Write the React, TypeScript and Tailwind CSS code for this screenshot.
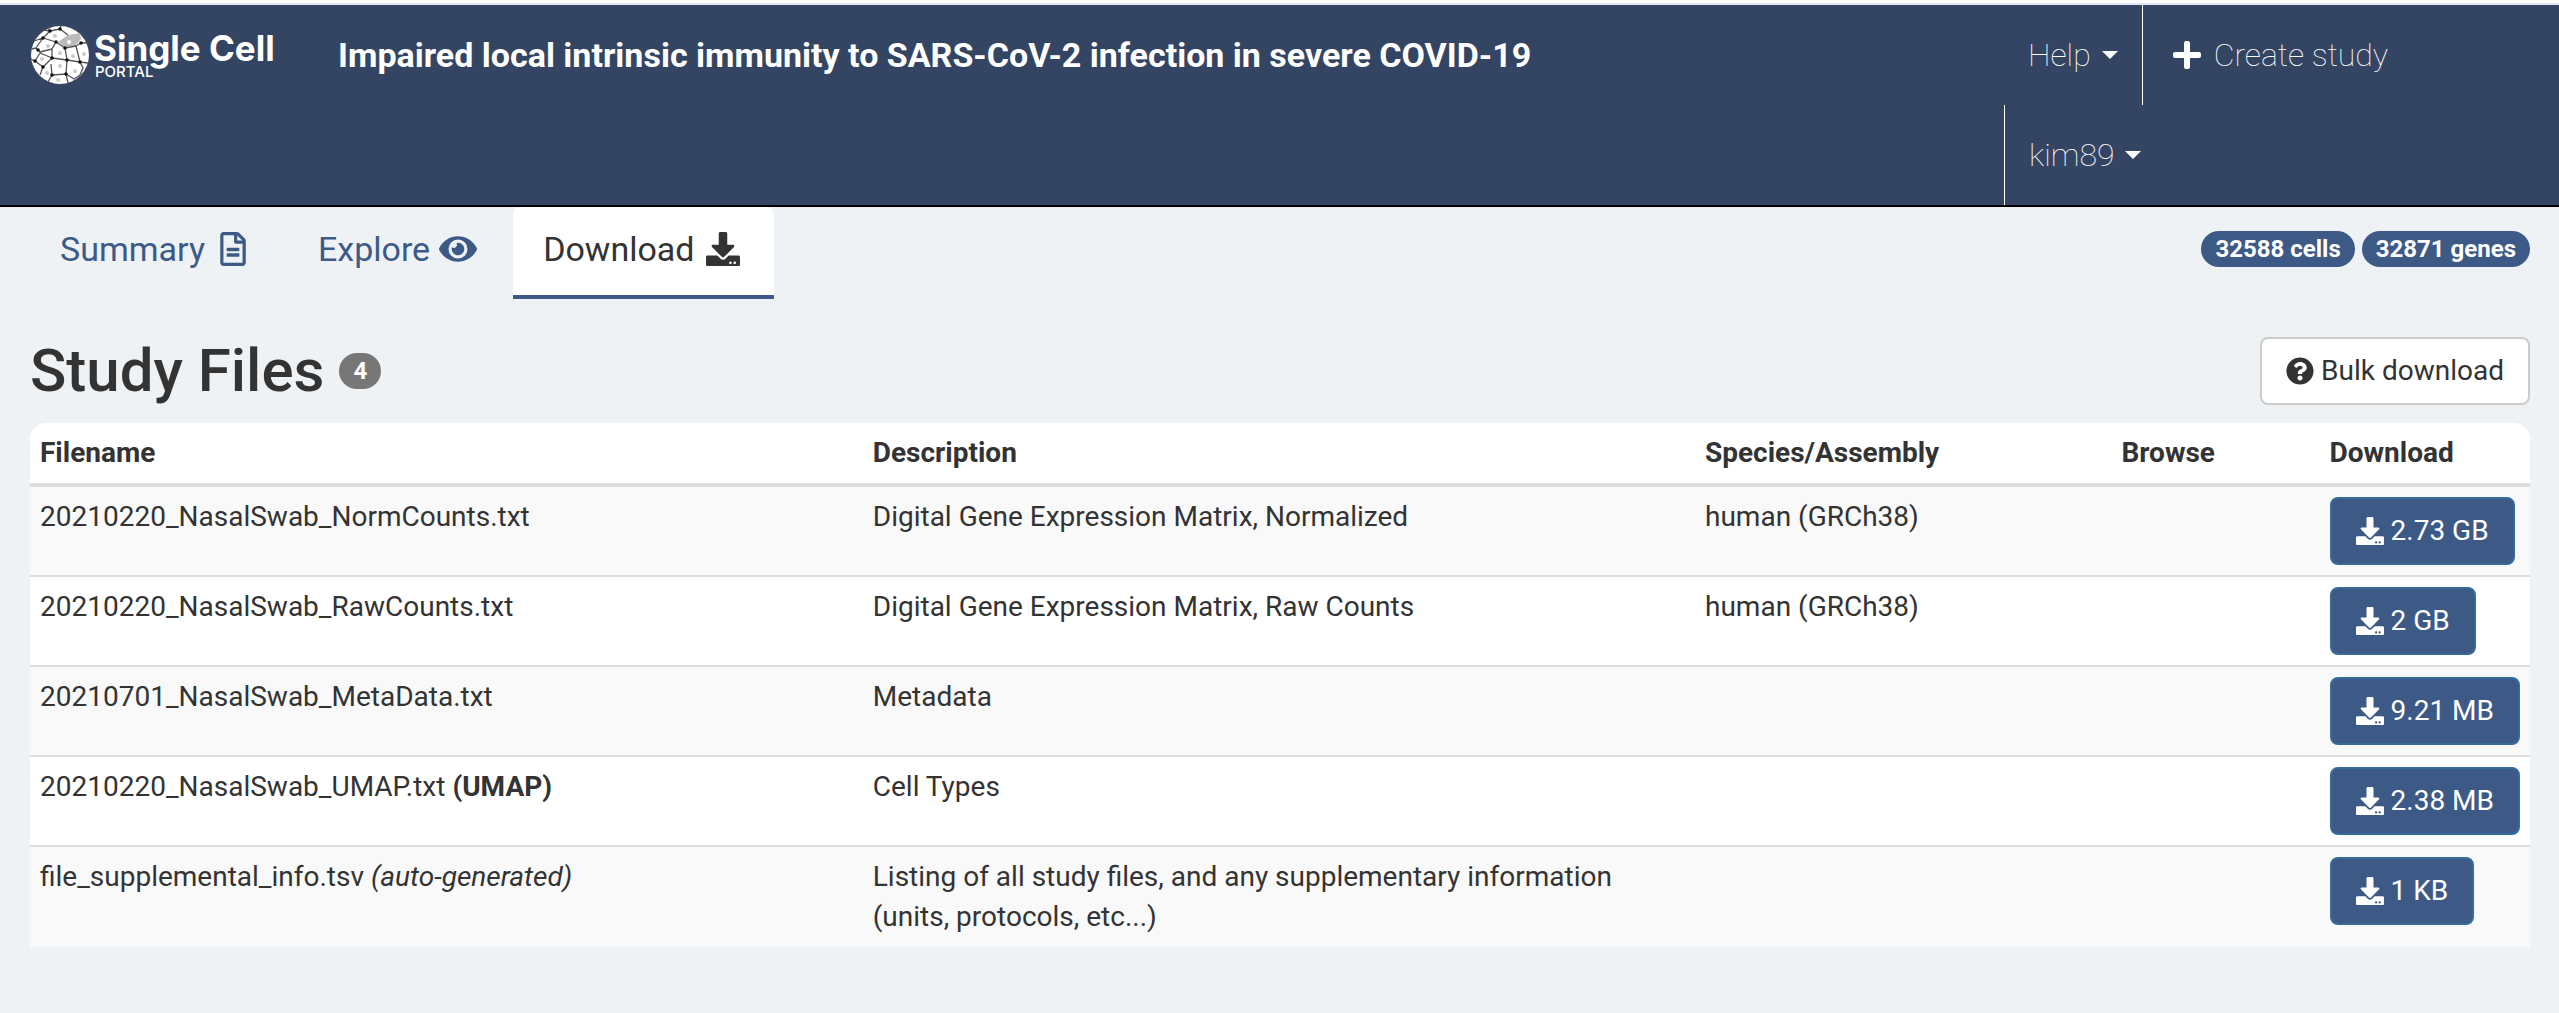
import React from "react";
import { FaDownload, FaEye, FaPlus, FaQuestionCircle, FaRegFileAlt } from "react-icons/fa";

interface StudyFile {
  name: string;
  note?: React.ReactNode;
  description: string;
  species?: string;
  size: string;
}

const files: StudyFile[] = [
  {
    name: "20210220_NasalSwab_NormCounts.txt",
    description: "Digital Gene Expression Matrix, Normalized",
    species: "human (GRCh38)",
    size: "2.73 GB",
  },
  {
    name: "20210220_NasalSwab_RawCounts.txt",
    description: "Digital Gene Expression Matrix, Raw Counts",
    species: "human (GRCh38)",
    size: "2 GB",
  },
  { name: "20210701_NasalSwab_MetaData.txt", description: "Metadata", size: "9.21 MB" },
  {
    name: "20210220_NasalSwab_UMAP.txt",
    note: <strong className="font-bold">(UMAP)</strong>,
    description: "Cell Types",
    size: "2.38 MB",
  },
  {
    name: "file_supplemental_info.tsv",
    note: <em>(auto-generated)</em>,
    description: "Listing of all study files, and any supplementary information (units, protocols, etc...)",
    size: "1 KB",
  },
];

// Cell walls of the round logo, the dark spots where they meet, and the nuclei
const walls =
  "M14 5 L20 6 L30 4 L38 10 M30 4 L31 0 M20 6 L18 2 M20 6 L13 13 L4 16 M13 13 L26 17 L22 24 L10 27 L6 23 L2 24 M6 23 L13 13 M22 24 L22 33 L10 28 L5 36 L1 34 M22 33 L13 42 L5 36 M22 33 L37 35 L35 23 L26 17 M35 23 L46 21 L51 18 L57 18 M46 21 L50 37 L37 35 M50 37 L58 38 M37 35 L36 49 L22 50 L21 39 M13 42 L10 50 M22 50 L18 57 M36 49 L38 58 M36 49 L44 54 L50 50 L53 43 L50 37";

const spots: [number, number][] = [
  [20, 6], [30, 4], [13, 13], [26, 17], [8, 25], [35, 23], [5, 36], [22, 33],
  [37, 35], [50, 37], [51, 18], [13, 42], [36, 49], [22, 50],
];

const nuclei: [number, number][] = [
  [25, 11], [18, 21], [30, 28], [12, 34], [43, 31], [54, 29], [30, 41], [17, 48], [45, 46], [28, 55],
];

function Logo() {
  return (
    <svg viewBox="0 0 248 60" className="h-[60px] w-[248px]" role="img" aria-label="Single Cell Portal">
      <circle cx="30" cy="30" r="29" fill="#fff" />
      <path d="M28 17 L38 10 L50 8 L51 14 L45 21 L35 22 Z" fill="#bbb" />
      <path d={walls} fill="none" stroke="#555" strokeWidth="1.3" strokeLinejoin="round" />
      {spots.map(([x, y]) => (
        <circle key={`${x}-${y}`} cx={x} cy={y} r="1.8" fill="#111" />
      ))}
      {nuclei.map(([x, y]) => (
        <circle key={`${x}-${y}`} cx={x} cy={y} r="2" fill="#ccc" />
      ))}
      <circle cx="39" cy="17" r="2" fill="#fff" />
      <text fill="#fff" fontFamily="Inter" fontWeight="700">
        <tspan x="64" y="36" fontSize="35">Single Cell</tspan>
        <tspan x="65" y="52" fontSize="15" fontWeight="500">PORTAL</tspan>
      </text>
    </svg>
  );
}

function Caret() {
  return <span className="h-0 w-0 border-x-8 border-t-8 border-x-transparent border-t-white" />;
}

function TopNav() {
  return (
    <header className="flex justify-between border-b-2 border-black bg-[#344563] text-white">
      <div className="flex h-[100px] items-start gap-[60px] pl-[30px]">
        <a href="#" className="pt-5">
          <Logo />
        </a>
        <h1 className="pt-[26px] text-[34px] leading-[48px] font-bold">
          Impaired local intrinsic immunity to SARS-CoV-2 infection in severe COVID-19
        </h1>
      </div>
      <nav className="w-[555px] text-[32px] font-thin">
        <div className="flex h-[100px]">
          <button type="button" className="flex items-center gap-[11px] px-6">
            Help <Caret />
          </button>
          <a href="#" className="flex items-center gap-[11px] border-l border-white px-7">
            <FaPlus className="size-8" /> Create study
          </a>
        </div>
        <div className="flex h-[100px]">
          <button type="button" className="flex items-center gap-[11px] border-l border-white px-6">
            kim89 <Caret />
          </button>
        </div>
      </nav>
    </header>
  );
}

function Tab({ label, icon, active = false }: { label: string; icon: React.ReactNode; active?: boolean }) {
  return (
    <a
      href="#"
      aria-current={active ? "page" : undefined}
      className={`flex items-center gap-[7px] rounded-t-lg border-b-4 px-[30px] pt-[18px] pb-[22px] text-[34px] leading-[48px] ${
        active ? "border-[#3d5a87] bg-white text-[#333]" : "border-transparent text-[#3d5a87]"
      }`}
    >
      {label}
      <span className="flex w-[42px] justify-center">{icon}</span>
    </a>
  );
}

function Badge({ children, gray = false }: { children: React.ReactNode; gray?: boolean }) {
  return (
    <span
      className={`rounded-[20px] px-[14px] py-1.5 text-2xl leading-6 font-bold text-white ${
        gray ? "bg-[#777]" : "bg-[#3d5a87]"
      }`}
    >
      {children}
    </span>
  );
}

export default function App() {
  return (
    <div className="min-h-screen bg-[#eef2f5] font-['Roboto',sans-serif] text-[28px] leading-10 text-[#333]">
      <div className="h-[5px] border-b-2 border-[#e3e6f0] bg-white" />
      <TopNav />

      <main className="px-[30px] pr-[29px]">
        <div className="flex items-start justify-between">
          <div className="flex gap-1">
            <Tab label="Summary" icon={<FaRegFileAlt />} />
            <Tab label="Explore" icon={<FaEye className="size-[38px]" />} />
            <Tab label="Download" icon={<FaDownload />} active />
          </div>
          <div className="flex gap-[7px] pt-6">
            <Badge>32588 cells</Badge>
            <Badge>32871 genes</Badge>
          </div>
        </div>

        <div className="mt-[38px] flex h-[68px] items-center justify-between">
          <div className="flex items-center gap-[15px]">
            <h2 className="text-[60px] leading-[66px] font-medium">Study Files</h2>
            <Badge gray>4</Badge>
          </div>
          <button type="button" className="flex items-center gap-[7px] rounded-lg border-2 border-[#ccc] bg-white px-6 py-3">
            <FaQuestionCircle /> Bulk download
          </button>
        </div>

        <table className="mt-[18px] w-full border-separate border-spacing-0 overflow-hidden rounded-t-2xl bg-white text-left">
          <thead>
            <tr className="[&>th]:border-b-4 [&>th]:border-[#ddd] [&>th]:p-[10px]">
              <th className="w-1/3">Filename</th>
              <th className="w-1/3">Description</th>
              <th className="w-1/6">Species/Assembly</th>
              <th className="w-1/12">Browse</th>
              <th className="w-1/12">Download</th>
            </tr>
          </thead>
          <tbody>
            {files.map((file) => (
              <tr
                key={file.name}
                className="align-top odd:bg-[#f9f9f9] [&:not(:first-child)>td]:border-t-2 [&>td]:border-[#ddd] [&>td]:p-[10px]"
              >
                <td>
                  {file.name} {file.note}
                </td>
                <td>{file.description}</td>
                <td>{file.species}</td>
                <td />
                <td>
                  <a
                    href="#"
                    className="flex w-fit items-center gap-[7px] rounded-lg border-2 border-[#366a99] bg-[#3d5a87] px-6 py-3 whitespace-nowrap text-white"
                  >
                    <FaDownload /> {file.size}
                  </a>
                </td>
              </tr>
            ))}
          </tbody>
        </table>
      </main>
    </div>
  );
}
